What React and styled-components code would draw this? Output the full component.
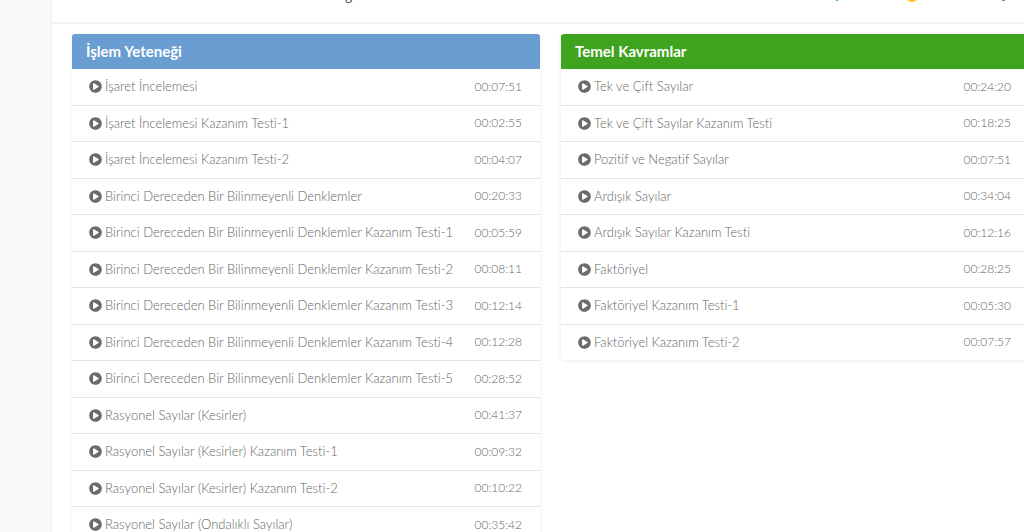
import React from "react";
import styled, { createGlobalStyle } from "styled-components";
import { FaPlayCircle } from "react-icons/fa";

const GlobalStyle = createGlobalStyle`
  * {
    box-sizing: border-box;
  }

  html,
  body,
  #root {
    height: 100%;
  }

  body {
    margin: 0;
    overflow: hidden;
    background: #f8f9fb;
    color: #666;
    font-family: Lato, "Noto Sans", sans-serif;
    font-size: 13px;
    font-weight: 300;
    font-variant-ligatures: none;
    line-height: 1.5;
  }
`;

const Page = styled.div`
  display: flex;
  height: 100%;
`;

const Sidebar = styled.aside`
  flex: 0 0 50px;
`;

const Main = styled.main`
  flex: 1;
  min-width: 0;
  overflow: hidden;
  background: #fff;
  border-left: 2px solid #f2f3f5;
`;

const TopBar = styled.header`
  display: flex;
  justify-content: space-between;
  align-items: flex-start;
  height: 24px;
  padding: 0 18px 0 293px;
  overflow: hidden;
  border-bottom: 2px solid #f4f4f4;
`;

const BarText = styled.span`
  margin-top: -14px;
  color: #555;
  font-size: 14px;
  font-weight: 400;
  line-height: 20px;
`;

const BarMarks = styled.svg`
  display: block;
  flex: none;
`;

const Columns = styled.div`
  display: grid;
  grid-template-columns: 1fr 1fr;
  align-items: start;
  gap: 21px;
  margin-right: -5px;
  padding: 10px 0 20px 20px;
`;

const Card = styled.section`
  border-radius: 3px;
  background: #fff;
  box-shadow: 0 1px 4px rgba(0, 0, 0, 0.08);
`;

const CardTitle = styled.h2`
  margin: 0;
  padding: 7px 14px;
  border-radius: 3px 3px 0 0;
  background: ${(props) => props.$color};
  color: #fff;
  font-size: 15px;
  font-weight: 700;
  line-height: 21px;
`;

const Lessons = styled.ul`
  margin: 0;
  padding: 0;
  list-style: none;
`;

const Lesson = styled.li`
  display: flex;
  align-items: center;
  padding: 8px 18px 8px 17px;

  & + & {
    border-top: 1px solid #e4e4e4;
  }

  svg {
    flex: none;
    margin-right: 3px;
    color: #6b6b6b;
  }

  time {
    margin-left: auto;
    font-size: 12px;
  }
`;

const sections = [
  {
    title: "İşlem Yeteneği",
    color: "#6a9dd2",
    lessons: [
      ["İşaret İncelemesi", "00:07:51"],
      ["İşaret İncelemesi Kazanım Testi-1", "00:02:55"],
      ["İşaret İncelemesi Kazanım Testi-2", "00:04:07"],
      ["Birinci Dereceden Bir Bilinmeyenli Denklemler", "00:20:33"],
      ["Birinci Dereceden Bir Bilinmeyenli Denklemler Kazanım Testi-1", "00:05:59"],
      ["Birinci Dereceden Bir Bilinmeyenli Denklemler Kazanım Testi-2", "00:08:11"],
      ["Birinci Dereceden Bir Bilinmeyenli Denklemler Kazanım Testi-3", "00:12:14"],
      ["Birinci Dereceden Bir Bilinmeyenli Denklemler Kazanım Testi-4", "00:12:28"],
      ["Birinci Dereceden Bir Bilinmeyenli Denklemler Kazanım Testi-5", "00:28:52"],
      ["Rasyonel Sayılar (Kesirler)", "00:41:37"],
      ["Rasyonel Sayılar (Kesirler) Kazanım Testi-1", "00:09:32"],
      ["Rasyonel Sayılar (Kesirler) Kazanım Testi-2", "00:10:22"],
      ["Rasyonel Sayılar (Ondalıklı Sayılar)", "00:35:42"],
    ],
  },
  {
    title: "Temel Kavramlar",
    color: "#3ea31e",
    lessons: [
      ["Tek ve Çift Sayılar", "00:24:20"],
      ["Tek ve Çift Sayılar Kazanım Testi", "00:18:25"],
      ["Pozitif ve Negatif Sayılar", "00:07:51"],
      ["Ardışık Sayılar", "00:34:04"],
      ["Ardışık Sayılar Kazanım Testi", "00:12:16"],
      ["Faktöriyel", "00:28:25"],
      ["Faktöriyel Kazanım Testi-1", "00:05:30"],
      ["Faktöriyel Kazanım Testi-2", "00:07:57"],
    ],
  },
];

const LessonCard = ({ title, color, lessons }) => (
  <Card>
    <CardTitle $color={color}>{title}</CardTitle>
    <Lessons>
      {lessons.map(([name, duration]) => (
        <Lesson key={name}>
          <FaPlayCircle size={13} />
          <span>{name}</span>
          <time>{duration}</time>
        </Lesson>
      ))}
    </Lessons>
  </Card>
);

const App = () => (
  <>
    <GlobalStyle />
    <Page>
      <Sidebar />
      <Main>
        <TopBar>
          <BarText>ğ</BarText>
          <BarMarks width="172" height="4" aria-hidden="true">
            <rect x="2" y="0" width="2" height="1" fill="#1cbfa5" />
            <circle cx="78" cy="-5" r="7" fill="#ffc81e" />
            <rect x="168" y="0" width="3" height="1" fill="#8d8082" />
          </BarMarks>
        </TopBar>
        <Columns>
          {sections.map((section) => (
            <LessonCard key={section.title} {...section} />
          ))}
        </Columns>
      </Main>
    </Page>
  </>
);

export default App;
